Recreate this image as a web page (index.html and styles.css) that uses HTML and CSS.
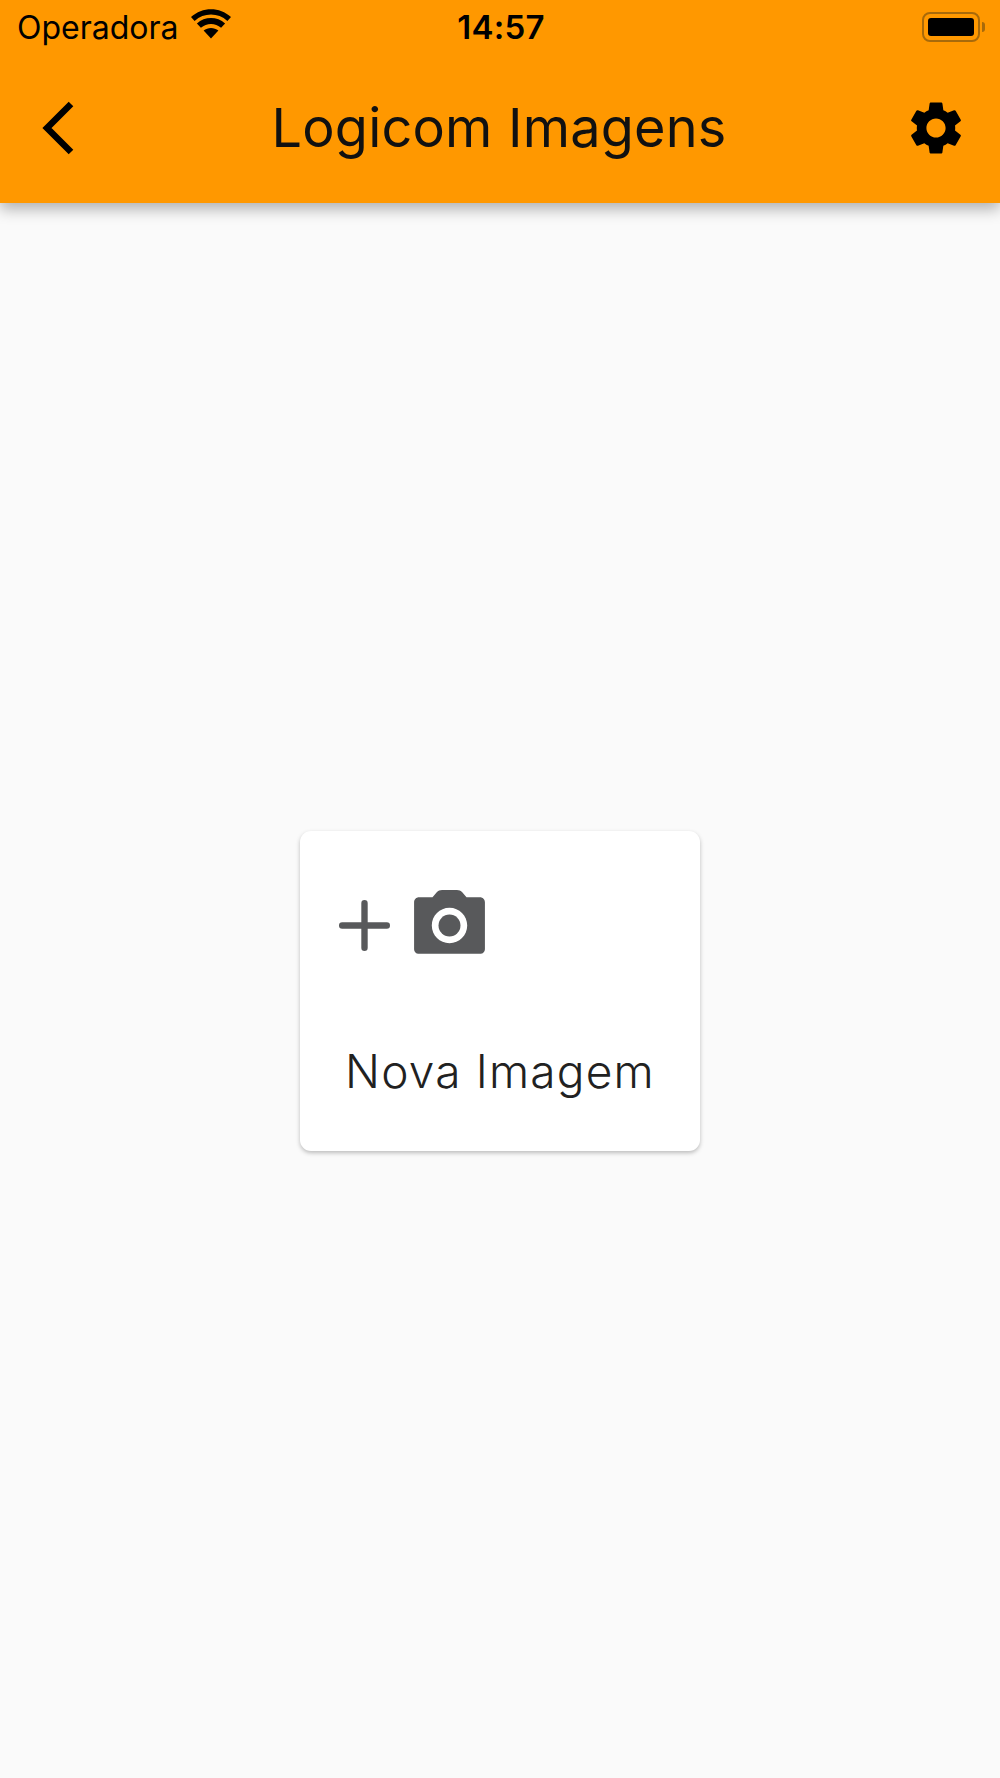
FILE: index.html
```html
<!DOCTYPE html>
<html lang="pt">

<head>
    <meta charset="UTF-8">
    <meta name="viewport" content="width=device-width, initial-scale=1.0">
    <title>Logicom Imagens</title>
    <link rel="stylesheet" href="styles.css">
</head>

<body>
    <header class="app-header">
        <div class="status-bar">
            <div class="status-left">
                <span class="carrier">Operadora</span>
                <svg class="wifi" viewBox="0 0 40 30">
                    <path d="M20 29.5 L12.6 21.6 C16.8 18 23.2 18 27.4 21.6 Z" />
                    <path d="M9.9 18.7 L5.9 14.4 C13.9 7.3 26.1 7.3 34.1 14.4 L30.1 18.7 C24.3 13.6 15.7 13.6 9.9 18.7 Z" />
                    <path d="M3.6 11.9 L0 8 C11.4 -2.4 28.6 -2.4 40 8 L36.4 11.9 C27 3.4 13 3.4 3.6 11.9 Z" />
                </svg>
            </div>
            <span class="clock">14:57</span>
            <div class="status-right">
                <div class="battery">
                    <div class="battery-level"></div>
                </div>
                <div class="battery-cap"></div>
            </div>
        </div>
        <div class="toolbar">
            <svg class="back" viewBox="0 0 32 54">
                <path d="M29 3 L5 27 L29 51" />
            </svg>
            <h1 class="title">Logicom Imagens</h1>
            <svg class="settings" viewBox="0 0 24 24">
                <path d="M19.14 12.94c.04-.3.06-.61.06-.94 0-.32-.02-.64-.07-.94l2.03-1.58c.18-.14.23-.41.12-.61l-1.92-3.32c-.12-.22-.37-.29-.59-.22l-2.39.96c-.5-.38-1.03-.7-1.62-.94l-.36-2.54c-.04-.24-.24-.41-.48-.41h-3.84c-.24 0-.43.17-.47.41l-.36 2.54c-.59.24-1.13.57-1.62.94l-2.39-.96c-.22-.08-.47 0-.59.22L2.74 8.87c-.12.21-.08.47.12.61l2.03 1.58c-.05.3-.09.63-.09.94s.02.64.07.94l-2.03 1.58c-.18.14-.23.41-.12.61l1.92 3.32c.12.22.37.29.59.22l2.39-.96c.5.38 1.03.7 1.62.94l.36 2.54c.05.24.24.41.48.41h3.84c.24 0 .44-.17.47-.41l.36-2.54c.59-.24 1.13-.56 1.62-.94l2.39.96c.22.08.47 0 .59-.22l1.92-3.32c.12-.22.07-.47-.12-.61l-2.01-1.58zM12 15.6c-1.98 0-3.6-1.62-3.6-3.6s1.62-3.6 3.6-3.6 3.6 1.62 3.6 3.6-1.62 3.6-3.6 3.6z" />
            </svg>
        </div>
    </header>

    <main class="content">
        <div class="card">
            <div class="card-icons">
                <svg class="icon" viewBox="0 0 24 24">
                    <path class="icon-plus" d="M5.7 12 H18.3 M12 5.7 V18.3" />
                </svg>
                <svg class="icon" viewBox="0 0 24 24">
                    <circle cx="12" cy="12" r="3.1" />
                    <path d="M9.9 2C9.3 2 8.8 2.2 8.4 2.6L7.2 4H3.4C2.6 4 2 4.6 2 5.4V18.6C2 19.4 2.6 20 3.4 20H20.6C21.4 20 22 19.4 22 18.6V5.4C22 4.6 21.4 4 20.6 4H16.8L15.6 2.6C15.2 2.2 14.7 2 14.1 2H9.9zM12 17c-2.76 0-5-2.24-5-5s2.24-5 5-5 5 2.24 5 5-2.24 5-5 5z" />
                </svg>
            </div>
            <p class="card-label">Nova Imagem</p>
        </div>
    </main>
</body>

</html>
```

FILE: styles.css
```css
* {
    box-sizing: border-box;
}

body {
    margin: 0;
    height: 1778px;
    display: flex;
    flex-direction: column;
    background-color: #fafafa;
    font-family: Inter, "Liberation Sans", sans-serif;
    color: #000;
    overflow: hidden;
}

.app-header {
    height: 203px;
    background-color: #ff9800;
    box-shadow: 0 6px 14px rgba(0, 0, 0, 0.3);
    z-index: 2;
}

.status-bar {
    height: 53px;
    padding: 1px 15px 0 17px;
    display: grid;
    grid-template-columns: 1fr auto 1fr;
    align-items: center;
}

.status-left {
    display: flex;
    align-items: center;
    gap: 12px;
}

.carrier {
    font-size: 32px;
    line-height: 51px;
}

.wifi {
    width: 40px;
    height: 30px;
    margin-top: -6px;
}

.clock {
    font-size: 33px;
    font-weight: 600;
    letter-spacing: 0.3px;
}

.status-right {
    display: flex;
    justify-content: flex-end;
    align-items: center;
}

.battery {
    width: 58px;
    height: 30px;
    padding: 4px;
    border: 2px solid #a86a0a;
    border-radius: 8px;
}

.battery-level {
    height: 100%;
    background-color: #000;
    border-radius: 3px;
}

.battery-cap {
    width: 3px;
    height: 10px;
    margin-left: 2px;
    background-color: #a86a0a;
    border-radius: 0 3px 3px 0;
}

.toolbar {
    height: 150px;
    padding: 0 32px 0 30px;
    display: grid;
    grid-template-columns: 1fr auto 1fr;
    align-items: center;
}

.back {
    width: 32px;
    height: 54px;
    margin-left: 12px;
    fill: none;
    stroke: #000;
    stroke-width: 6.5;
}

.title {
    margin: 0;
    font-size: 54px;
    font-weight: 400;
    letter-spacing: 0.2px;
    line-height: 64px;
    color: #111;
}

.settings {
    width: 64px;
    height: 64px;
    justify-self: end;
}

.content {
    flex: 1;
    display: flex;
    align-items: center;
    justify-content: center;
}

.card {
    width: 400px;
    height: 320px;
    padding: 52px 22px 0;
    background-color: #fff;
    border-radius: 11px;
    box-shadow: 0 2px 4px rgba(0, 0, 0, 0.25);
}

.card-icons {
    display: flex;
}

.icon {
    width: 85px;
    height: 85px;
    fill: #58595b;
}

.icon-plus {
    fill: none;
    stroke: #58595b;
    stroke-width: 1.8;
    stroke-linecap: round;
}

.card-label {
    margin: 73px 0 0;
    font-size: 46px;
    font-weight: 300;
    letter-spacing: 1.2px;
    line-height: 60px;
    text-align: center;
    color: #212121;
}
```
